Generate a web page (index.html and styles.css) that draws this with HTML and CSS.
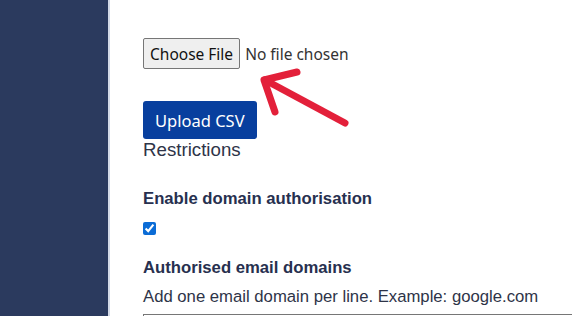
FILE: index.html
```html
<!DOCTYPE html>
<html lang="en">
<head>
  <meta charset="UTF-8" />
  <title>Settings</title>
  <link rel="stylesheet" href="styles.css">
</head>
<body>

<div class="layout">
  <aside class="sidebar"></aside>

  <main class="content">
    <form class="upload-form">
      <input type="file" class="file-input" accept=".csv" />
      <button type="button" class="btn-upload">Upload CSV</button>
    </form>

    <h2 class="section-title">Restrictions</h2>

    <div class="field">
      <label class="field-label">Enable domain authorisation</label>
      <input type="checkbox" class="field-check" checked />
    </div>

    <div class="field">
      <label class="field-label">Authorised email domains</label>
      <p class="field-hint">Add one email domain per line. Example: google.com</p>
      <textarea class="field-text" rows="4"></textarea>
    </div>

    <!-- annotation arrow -->
    <svg class="arrow" width="105" height="70" viewBox="0 0 105 70">
      <path d="M95 61 L15 18" stroke="#e3203a" stroke-width="7" stroke-linecap="round" fill="none"/>
      <path d="M47 10 L14 18 L25 50" stroke="#e3203a" stroke-width="7" stroke-linecap="round" stroke-linejoin="round" fill="none"/>
    </svg>
  </main>
</div>

</body>
</html>
```

FILE: styles.css
```css
* { box-sizing: border-box; }
body {
  margin: 0;
  font-family: 'Liberation Sans', Arial, sans-serif;
  background: #fff;
  color: #2b344f;
  overflow: hidden;
}
.layout {
  display: flex;
  height: 316px;
}
.sidebar {
  width: 110px;
  flex-shrink: 0;
  background: #2b3a5e;
  border-right: 2px solid #d3d9e6;
}
.content {
  position: relative;
  flex: 1;
  padding: 38px 0 0 33px;
}
.upload-form {
  display: flex;
  flex-direction: column;
  align-items: flex-start;
}
.file-input {
  font-family: 'Noto Sans', 'Open Sans', sans-serif;
  font-size: 15.5px;
  color: #333;
}
.file-input::file-selector-button {
  font-family: inherit;
  font-size: 15.5px;
  height: 31px;
  padding: 0 6px;
  margin-right: 5px;
  background: #efefef;
  border: 1px solid #767676;
  border-radius: 2px;
  color: #111;
}
.btn-upload {
  margin-top: 32px;
  background: #083f9e;
  color: #fff;
  border: none;
  border-radius: 3px;
  padding: 0 12px;
  height: 38px;
  font-family: 'Noto Sans', 'Open Sans', sans-serif;
  font-size: 16.5px;
}
.section-title {
  margin: 0;
  font-size: 18.7px;
  font-weight: normal;
  color: #2e3448;
}
.field {
  margin-top: 28px;
}
.field + .field {
  margin-top: 23px;
}
.field-label {
  display: block;
  font-weight: bold;
  font-size: 16.7px;
  color: #27304f;
}
.field-check {
  display: block;
  margin: 13px 0 0 0;
  width: 13px;
  height: 13px;
  accent-color: #0b6cd6;
}
.field-hint {
  margin: 9px 0 0;
  font-size: 16.7px;
  color: #2e3448;
}
.field-text {
  display: block;
  width: 100%;
  margin-top: 7px;
  border: 1px solid #767676;
  border-right: none;
}
.arrow {
  position: absolute;
  left: 140px;
  top: 62px;
}
```
